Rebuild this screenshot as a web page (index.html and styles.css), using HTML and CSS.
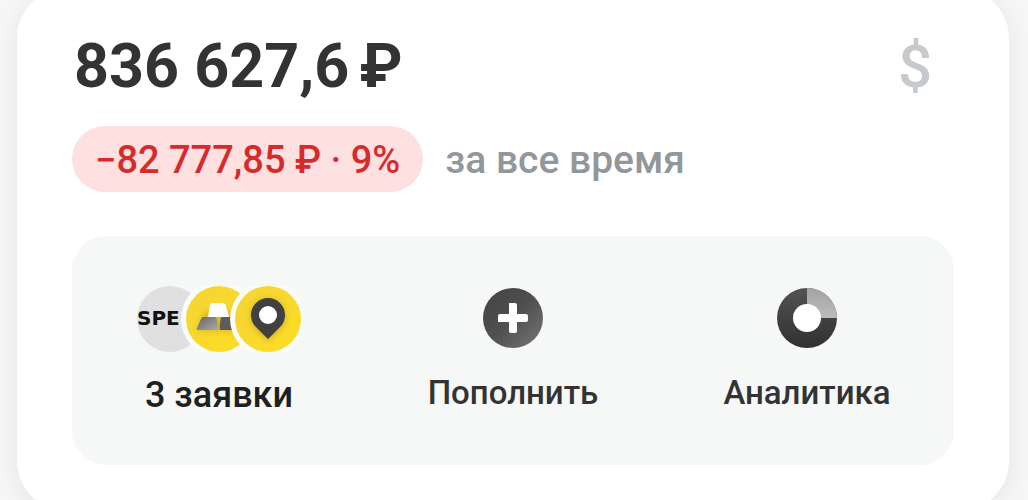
FILE: index.html
```html
<!DOCTYPE html>
<html lang="ru">
<head>
  <meta charset="UTF-8">
  <meta name="viewport" content="width=device-width, initial-scale=1">
  <title>Портфель</title>
  <link rel="stylesheet" href="styles.css">
</head>
<body>

  <main class="card">
    <div class="card-top">
      <h1 class="amount">836 627,6&#8198;₽</h1>
      <button class="currency" type="button" aria-label="Валюта">$</button>
    </div>

    <div class="result">
      <span class="badge">−82 777,85 ₽ · 9%</span>
      <span class="period">за все время</span>
    </div>

    <div class="actions">
      <!-- Orders -->
      <button class="action action-orders" type="button">
        <svg class="icon-orders" viewBox="0 0 164 66" aria-hidden="true">
          <defs>
            <linearGradient id="yellow" x1="0" y1="0" x2="1" y2="1">
              <stop offset="0" stop-color="#f3d536"/>
              <stop offset="1" stop-color="#ffdc24"/>
            </linearGradient>
            <linearGradient id="ingot" x1="0" y1="0" x2="1" y2="1">
              <stop offset="0" stop-color="#666"/>
              <stop offset="1" stop-color="#aaa"/>
            </linearGradient>
            <filter id="soft" x="-50%" y="-50%" width="200%" height="200%">
              <feGaussianBlur stdDeviation="3"/>
            </filter>
            <clipPath id="first"><rect width="43" height="66"/></clipPath>
            <clipPath id="second"><circle cx="82" cy="33" r="33"/></clipPath>
          </defs>
          <circle cx="33" cy="33" r="33" fill="#e0e0e1"/>
          <text class="ticker" x="0" y="39" clip-path="url(#first)">SPE</text>
          <circle cx="82" cy="33" r="38" fill="#fafbfb"/>
          <circle cx="82" cy="33" r="33" fill="url(#yellow)"/>
          <g clip-path="url(#second)">
            <path d="M60 45L67 26H99V45Z" fill="#a98c18" opacity=".4" filter="url(#soft)"/>
            <path d="M75 17H86Q88 17 89 20L92 31H71L73 19Q74 17 75 17Z" fill="#fff"/>
            <path d="M66 31H80L82 44H61Q59 44 60 42L64 33Q65 31 66 31Z" fill="url(#ingot)"/>
            <path d="M81 31H98L104 44H83Z" fill="#5d5c58"/>
            <path d="M79 31H84L82 44Z" fill="#d8b92d"/>
          </g>
          <circle cx="131" cy="33" r="38" fill="#fafbfb"/>
          <circle cx="131" cy="33" r="33" fill="url(#yellow)"/>
          <path d="M131 54L117 40A17 17 0 1 1 145 40Z" fill="#8c741b" opacity=".5" filter="url(#soft)"/>
          <path d="M131 53L118 40A17 17 0 1 1 144 40Z" fill="#414141"/>
          <circle cx="131" cy="29" r="9" fill="#fff"/>
        </svg>
        <span>3 заявки</span>
      </button>

      <!-- Deposit -->
      <button class="action" type="button">
        <svg class="icon" viewBox="0 0 60 60" aria-hidden="true">
          <defs>
            <linearGradient id="plus" x1="0" y1="0" x2="1" y2="1">
              <stop offset="0" stop-color="#424242"/>
              <stop offset=".5" stop-color="#505050"/>
              <stop offset="1" stop-color="#777"/>
            </linearGradient>
          </defs>
          <circle cx="30" cy="30" r="30" fill="url(#plus)"/>
          <path d="M26 15H32Q34 15 34 17V26H43Q45 26 45 28V32Q45 34 43 34H34V43Q34 45 32 45H28Q26 45 26 43V34H15V28Q15 26 17 26H26Z" fill="#fff"/>
        </svg>
        <span>Пополнить</span>
      </button>

      <!-- Analytics -->
      <button class="action" type="button">
        <svg class="icon" viewBox="0 0 60 60" aria-hidden="true">
          <defs>
            <linearGradient id="dark" x1="0" y1="0" x2="0" y2="1">
              <stop offset="0" stop-color="#535353"/>
              <stop offset="1" stop-color="#303030"/>
            </linearGradient>
            <linearGradient id="light" x1="0" y1="0" x2="0" y2="1">
              <stop offset="0" stop-color="#a3a3a3"/>
              <stop offset="1" stop-color="#bcbcbc"/>
            </linearGradient>
          </defs>
          <circle cx="30" cy="30" r="30" fill="url(#dark)"/>
          <path d="M30 30V0A30 30 0 0 1 60 30Z" fill="url(#light)"/>
          <circle cx="30" cy="30" r="14" fill="#fff"/>
        </svg>
        <span>Аналитика</span>
      </button>
    </div>
  </main>

</body>
</html>
```
FILE: styles.css
```css
* {
  box-sizing: border-box;
}

body {
  margin: 0;
  height: 100vh;
  overflow: hidden;
  background: #f6f6f6;
  font-family: Roboto, "Noto Sans", sans-serif;
  color: #333;
}

button {
  border: none;
  background: none;
  padding: 0;
  font: inherit;
  color: inherit;
  cursor: pointer;
}

.card {
  margin: -12px 19px 0 17px;
  padding: 42px 55px 46px;
  background: #fff;
  border-radius: 50px;
  box-shadow: 0 4px 24px rgba(0, 0, 0, 0.07);
}

.card-top {
  display: flex;
  justify-content: space-between;
  align-items: center;
  padding: 0 22px 0 2px;
}

.amount {
  margin: 0;
  font-size: 61px;
  line-height: 72px;
  font-weight: 700;
}

.currency {
  padding-top: 2px;
  font-size: 60px;
  line-height: 70px;
  font-weight: 500;
  color: #c7cacc;
}

.result {
  display: flex;
  align-items: center;
  gap: 22px;
  margin-top: 24px;
}

.badge {
  padding: 2px 23px 0;
  border-radius: 33px;
  background: #ffe0e0;
  color: #d52b2b;
  font-size: 38px;
  line-height: 64px;
  font-weight: 500;
}

.period {
  padding-top: 2px;
  color: #92979b;
  font-size: 39px;
  line-height: 64px;
  font-weight: 500;
}

.actions {
  display: grid;
  grid-template-columns: repeat(3, 1fr);
  align-items: start;
  margin-top: 44px;
  padding: 50px 0;
  border-radius: 34px;
  background: #f6f8f8;
}

.action {
  display: flex;
  flex-direction: column;
  align-items: center;
  gap: 25px;
  padding: 2px 0;
  font-size: 33px;
  line-height: 40px;
  font-weight: 500;
}

.action-orders {
  gap: 23px;
  padding: 0;
  font-size: 36px;
  color: #202020;
}

.icon {
  width: 60px;
  height: 60px;
}

.icon-orders {
  width: 164px;
  height: 66px;
}

.ticker {
  font-family: "DejaVu Sans", sans-serif;
  font-size: 20px;
  font-weight: 700;
  fill: #111;
}
```
